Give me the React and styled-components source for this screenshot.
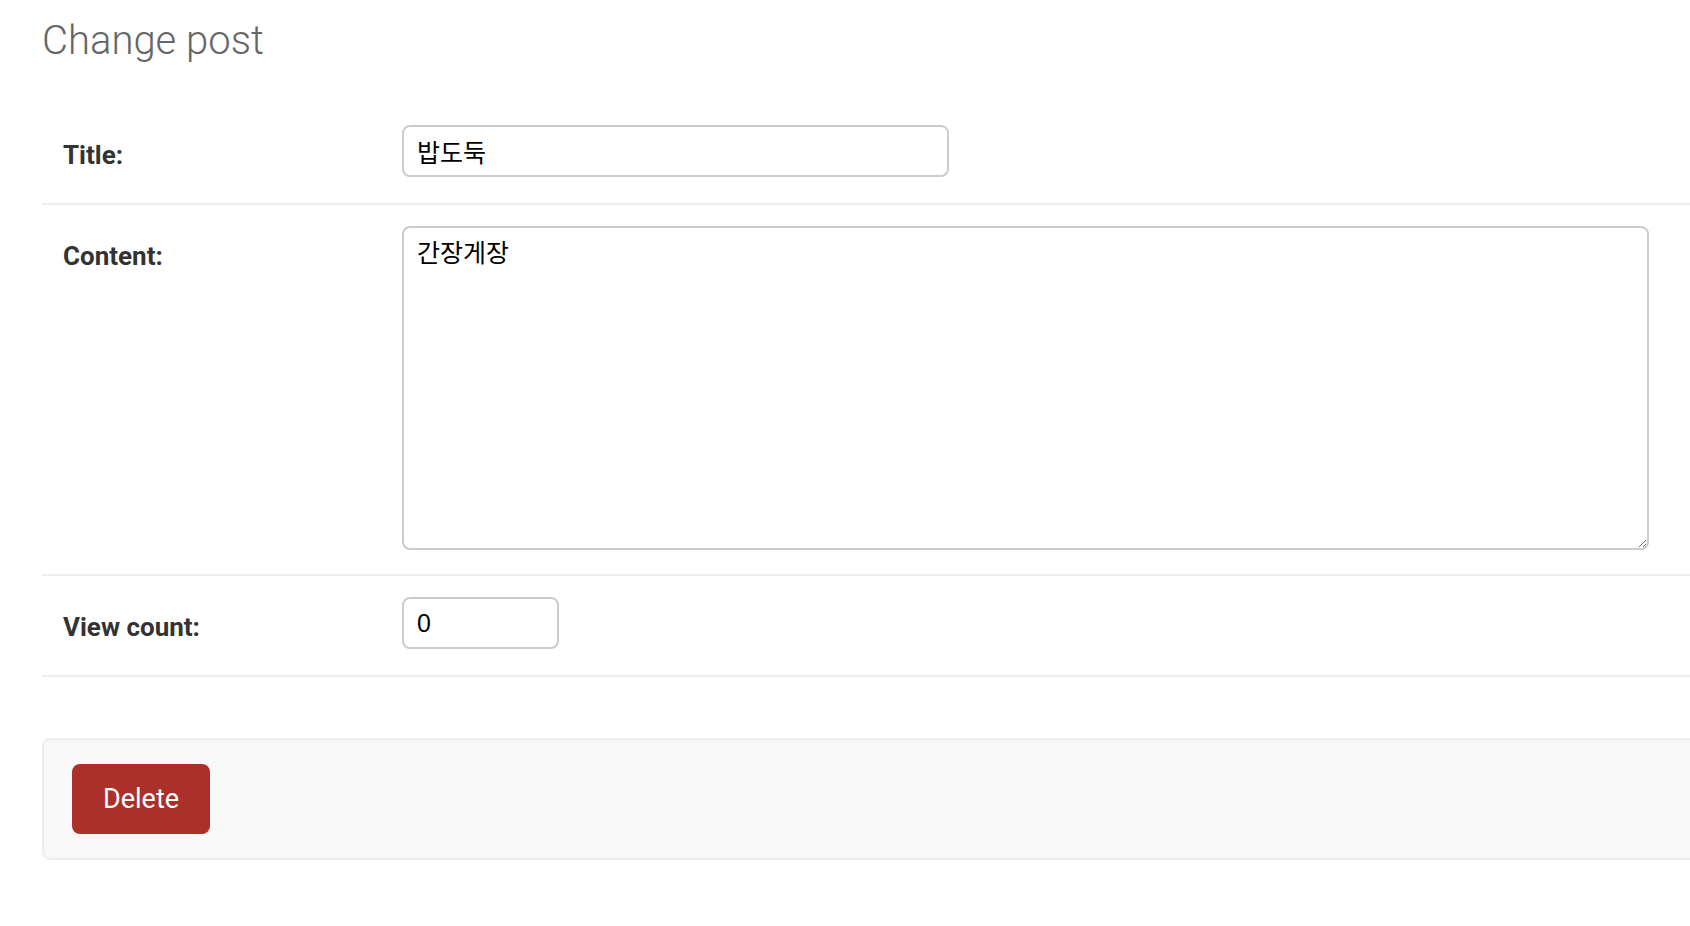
import React from "react";
import styled, { createGlobalStyle } from "styled-components";

const fields = [
  { name: "title", label: "Title:", kind: "text", value: "밥도둑", width: 547 },
  { name: "content", label: "Content:", kind: "textarea", value: "간장게장" },
  { name: "view_count", label: "View count:", kind: "number", value: "0", width: 157 },
];

const App = () => {
  return (
    <Page>
      <GlobalStyle />
      <Heading>Change post</Heading>
      <Form onSubmit={(e) => e.preventDefault()}>
        {fields.map((field) => (
          <FormRow key={field.name} $tall={field.kind === "textarea"}>
            <Label htmlFor={field.name}>{field.label}</Label>
            {field.kind === "textarea" ? (
              <TextArea id={field.name} defaultValue={field.value} />
            ) : (
              <Input
                id={field.name}
                type="text"
                defaultValue={field.value}
                $width={field.width}
              />
            )}
          </FormRow>
        ))}
        <SubmitRow>
          <DeleteButton type="button">Delete</DeleteButton>
        </SubmitRow>
      </Form>
    </Page>
  );
};

export default App;

// Styled Components
const GlobalStyle = createGlobalStyle`
  html, body {
    margin: 0;
    padding: 0;
    background: #fff;
    overflow: hidden;
  }
  body {
    font-family: Roboto, "Liberation Sans", sans-serif;
    color: #333;
  }
`;

const Page = styled.div`
  width: 1690px;
  height: 926px;
  padding: 18px 0 0 42px;
  box-sizing: border-box;
  overflow: hidden;
`;

const Heading = styled.h1`
  margin: 0;
  font-family: Roboto, sans-serif;
  font-weight: 300;
  font-size: 40px;
  line-height: 46px;
  color: #666;
`;

const Form = styled.form`
  width: 1700px;
  margin-top: 40px;
`;

const FormRow = styled.div`
  display: grid;
  grid-template-columns: 339px 1fr;
  align-items: start;
  padding: 21px 0 ${(p) => (p.$tall ? 24 : 26)}px 21px;
  border-bottom: 2px solid #eee;
`;

const Label = styled.label`
  padding-top: 15px;
  font-family: Roboto, sans-serif;
  font-weight: 700;
  font-size: 26px;
  line-height: 30px;
  color: #333;
`;

const fieldBase = `
  box-sizing: border-box;
  border: 2px solid #ccc;
  border-radius: 8px;
  background: #fff;
  color: #000;
  font-family: "Liberation Sans", "Noto Sans CJK KR", sans-serif;
  font-size: 25px;
  outline: none;
  margin: 0;
`;

const Input = styled.input`
  ${fieldBase}
  width: ${(p) => p.$width}px;
  height: 52px;
  padding: 0 13px;
`;

const TextArea = styled.textarea`
  ${fieldBase}
  display: block;
  width: 1247px;
  height: 324px;
  padding: 10px 13px;
  line-height: 1.2;
  resize: both;
`;

const SubmitRow = styled.div`
  display: flex;
  margin-top: 61px;
  padding: 24px 28px;
  background: #f8f8f8;
  border: 2px solid #eee;
  border-radius: 8px;
`;

const DeleteButton = styled.button`
  display: flex;
  align-items: center;
  height: 70px;
  padding: 0 31px;
  border: none;
  border-radius: 8px;
  background: #ac302a;
  color: #fff;
  font-family: Roboto, sans-serif;
  font-size: 27px;
  font-weight: 400;
  cursor: pointer;
`;
